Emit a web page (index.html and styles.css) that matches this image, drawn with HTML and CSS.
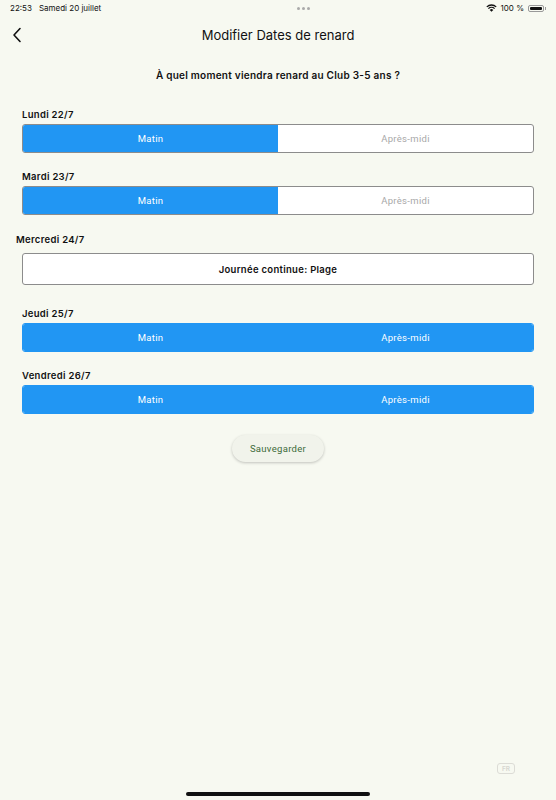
FILE: index.html
```html
<!DOCTYPE html>
<html lang="fr">
<head>
    <meta charset="UTF-8">
    <meta name="viewport" content="width=device-width, initial-scale=1.0">
    <title>Modifier Dates de renard</title>
    <link rel="stylesheet" href="styles.css">
</head>
<body>
    <div class="screen">
        <div class="status-bar">
            <div class="status-left">
                <span class="time">22:53</span>
                <span class="date">Samedi 20 juillet</span>
            </div>
            <div class="status-dots"><i></i><i></i><i></i></div>
            <div class="status-right">
                <svg class="wifi" width="11" height="8" viewBox="0 0 11 8">
                    <path d="M5.5 7.8 L3.7 5.9 A2.6 2.6 0 0 1 7.3 5.9 Z" fill="#111"/>
                    <path d="M2.4 4.6 A4.4 4.4 0 0 1 8.6 4.6" stroke="#111" stroke-width="1.3" fill="none"/>
                    <path d="M0.8 2.9 A6.8 6.8 0 0 1 10.2 2.9" stroke="#111" stroke-width="1.3" fill="none"/>
                </svg>
                <span class="battery-text">100 %</span>
                <span class="battery"><span class="battery-fill"></span></span>
                <span class="battery-nub"></span>
            </div>
        </div>

        <div class="nav-bar">
            <button class="back-button">
                <svg width="10" height="16" viewBox="0 0 10 16">
                    <path d="M8 1.5 L2 8 L8 14.5" stroke="#111" stroke-width="1.6" fill="none" stroke-linecap="round" stroke-linejoin="round"/>
                </svg>
            </button>
            <h1 class="nav-title">Modifier Dates de renard</h1>
        </div>

        <p class="question">À quel moment viendra renard au Club 3-5 ans ?</p>

        <div class="days">
            <div class="day">
                <div class="day-label">Lundi 22/7</div>
                <div class="segment">
                    <div class="segment-option selected">Matin</div>
                    <div class="segment-option">Après-midi</div>
                </div>
            </div>

            <div class="day">
                <div class="day-label">Mardi 23/7</div>
                <div class="segment">
                    <div class="segment-option selected">Matin</div>
                    <div class="segment-option">Après-midi</div>
                </div>
            </div>

            <div class="day day-fullday">
                <div class="day-label">Mercredi 24/7</div>
                <div class="fullday-box">Journée continue: Plage</div>
            </div>

            <div class="day day-after-fullday">
                <div class="day-label">Jeudi 25/7</div>
                <div class="segment all-selected">
                    <div class="segment-option selected">Matin</div>
                    <div class="segment-option selected">Après-midi</div>
                </div>
            </div>

            <div class="day">
                <div class="day-label">Vendredi 26/7</div>
                <div class="segment all-selected">
                    <div class="segment-option selected">Matin</div>
                    <div class="segment-option selected">Après-midi</div>
                </div>
            </div>
        </div>

        <div class="actions">
            <button class="save-button">Sauvegarder</button>
        </div>

        <div class="lang-badge">FR</div>
        <div class="home-indicator"></div>
    </div>
</body>
</html>
```

FILE: styles.css
```css
body {
    margin: 0;
    background-color: #f7f9f1;
    font-family: Inter, "Liberation Sans", Arial, sans-serif;
    color: #111;
}

.screen {
    position: relative;
    width: 556px;
    height: 800px;
    overflow: hidden;
}

/* status bar */
.status-bar {
    height: 16px;
    display: flex;
    align-items: center;
    justify-content: space-between;
    padding: 0 10px;
    font-size: 8px;
}

.status-left {
    display: flex;
    gap: 7px;
}

.status-dots {
    display: flex;
    gap: 2px;
    margin-left: 20px;
}

.status-dots i {
    width: 3px;
    height: 3px;
    border-radius: 50%;
    background-color: #aaa;
}

.status-right {
    display: flex;
    align-items: center;
}

.wifi {
    margin-right: 4px;
}

.battery-text {
    margin-right: 4px;
}

.battery {
    width: 16px;
    height: 7px;
    border: 1px solid #999;
    border-radius: 2px;
    padding: 1px;
    box-sizing: border-box;
    display: flex;
}

.battery-fill {
    flex: 1;
    background-color: #111;
    border-radius: 1px;
}

.battery-nub {
    width: 1px;
    height: 3px;
    background-color: #999;
    margin-left: 1px;
}

/* nav */
.nav-bar {
    position: relative;
    height: 38px;
    display: flex;
    align-items: center;
    justify-content: center;
}

.back-button {
    position: absolute;
    left: 12px;
    top: 11px;
    background: none;
    border: none;
    padding: 0;
    line-height: 0;
}

.nav-title {
    margin: 0;
    font-size: 13px;
    font-weight: 400;
}

.question {
    margin: 15px 0 0;
    text-align: center;
    font-size: 10px;
    font-weight: 600;
    letter-spacing: 0.25px;
    line-height: 12px;
}

/* days */
.days {
    margin-top: 28px;
    padding: 0 22px;
    display: flex;
    flex-direction: column;
    gap: 18px;
}

.day-label {
    font-size: 9.5px;
    font-weight: 600;
    letter-spacing: 0.3px;
    line-height: 12px;
    margin-bottom: 3px;
}

.day-fullday {
    margin-top: 1px;
}

.day-fullday .day-label {
    margin-left: -6px;
    margin-bottom: 7px;
}

.day-after-fullday {
    margin-top: 5px;
}

.segment {
    display: flex;
    height: 29px;
    border: 1px solid #8c8c8c;
    border-radius: 3px;
    box-sizing: border-box;
    overflow: hidden;
    background-color: #fff;
}

.segment.all-selected {
    border-color: #2196f3;
}

.segment-option {
    flex: 1;
    display: flex;
    align-items: center;
    justify-content: center;
    font-family: Roboto, "Liberation Sans", sans-serif;
    font-size: 9.5px;
    letter-spacing: 0.3px;
    color: #a8a8a8;
}

.segment-option.selected {
    background-color: #2196f3;
    color: #fff;
}

.fullday-box {
    height: 32px;
    border: 1px solid #8c8c8c;
    border-radius: 3px;
    box-sizing: border-box;
    background-color: #fff;
    display: flex;
    align-items: center;
    justify-content: center;
    font-size: 9.5px;
    font-weight: 600;
    letter-spacing: 0.3px;
}

.actions {
    display: flex;
    justify-content: center;
    margin-top: 21px;
}

.save-button {
    width: 92px;
    height: 27px;
    border: none;
    border-radius: 14px;
    background-color: #f1f3eb;
    box-shadow: 0 1px 3px rgba(0, 0, 0, 0.22);
    font-family: Roboto, "Liberation Sans", sans-serif;
    font-size: 9.5px;
    letter-spacing: 0.3px;
    color: #3d6b3a;
}

.lang-badge {
    position: absolute;
    left: 497px;
    top: 763px;
    width: 18px;
    height: 11px;
    border: 1px solid #dcdcd6;
    border-radius: 3px;
    box-sizing: border-box;
    font-size: 6.5px;
    font-weight: 600;
    color: #d6d6d0;
    display: flex;
    align-items: center;
    justify-content: center;
}

.home-indicator {
    position: absolute;
    left: 186px;
    top: 792px;
    width: 184px;
    height: 4px;
    border-radius: 2px;
    background-color: #111;
}
```
